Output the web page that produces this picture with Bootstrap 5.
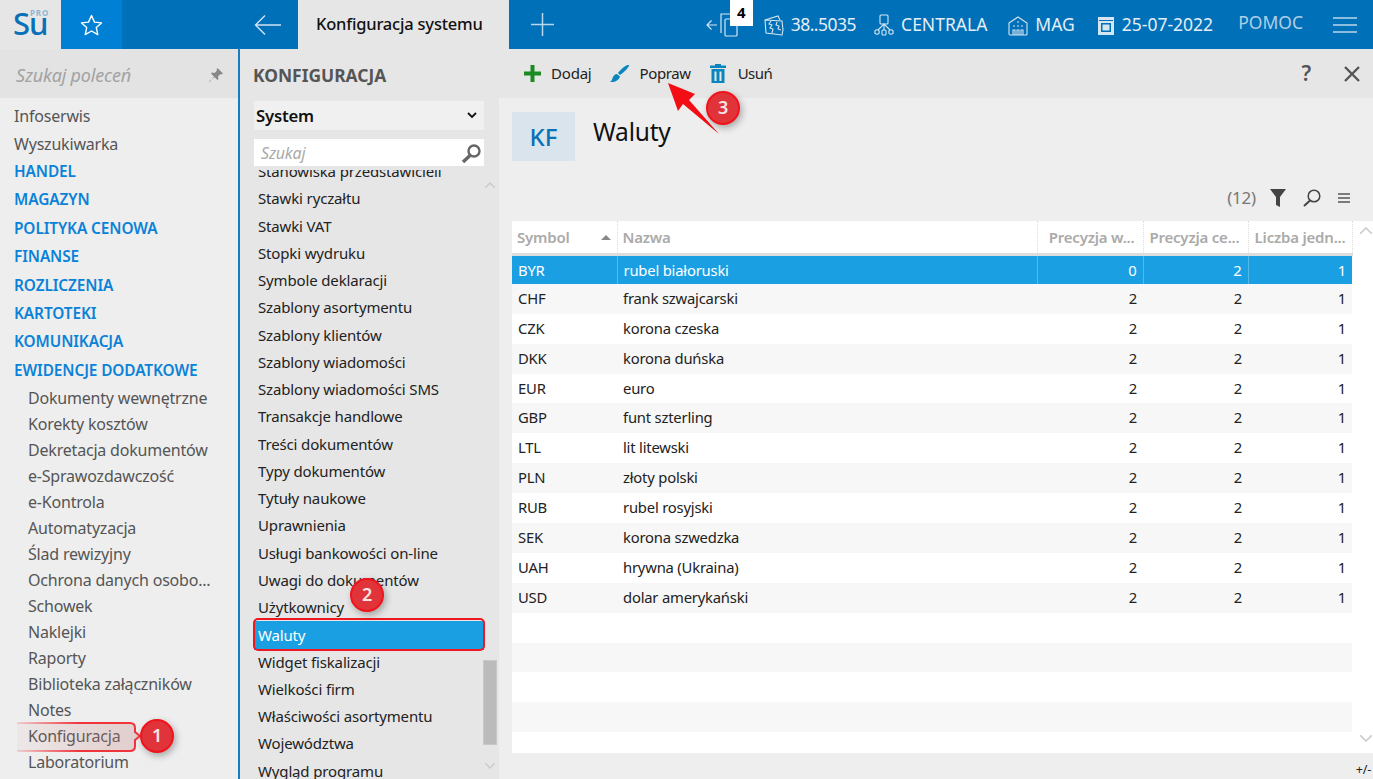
<!DOCTYPE html>
<html lang="pl"><head><meta charset="utf-8"><title>Waluty</title>
<link href="https://cdn.jsdelivr.net/npm/bootstrap@5.3.0/dist/css/bootstrap.min.css" rel="stylesheet">
<style>
html,body{height:779px;overflow:hidden;margin:0}
body{font-family:"Noto Sans","Open Sans",sans-serif;font-size:15px;background:#eee;color:#222;position:relative;letter-spacing:-.2px}
.topbar{height:49px;background:#0070b8;color:#e4eef6}
.logo-box{width:61px;background:#e6e6e6;position:relative;color:#0a70b8}
.logo-su{position:absolute;left:13px;top:10px;font-size:31px;font-weight:500;letter-spacing:-1px;line-height:26px}
.logo-pro{position:absolute;left:30px;top:8px;font-size:8px;font-weight:700;color:#8fb6d3;letter-spacing:.9px;line-height:9px}
.star-box{width:61px;background:#0080d5}
.top-gap{width:115px}
.back-box{width:61px}
.tab-box{width:211px;background:#e6e6e6;color:#111;font-size:16.5px;font-weight:500;padding-left:18px;white-space:nowrap}
.plus-box{width:66px}
.top-item{font-size:17.5px;white-space:nowrap;gap:7px;letter-spacing:0}
.win-box{position:relative;width:48px;height:49px;margin-right:11px}
.win-count{position:absolute;right:0;top:0;width:23px;height:26px;background:#fff;color:#000;font-weight:700;font-size:15px;line-height:24px;text-align:center}
.win-svg{position:absolute;left:0;top:11px}
.workspace{height:730px}
.side-one{width:238px;background:#eee}
.side-line{width:2px;background:#1a7cc0}
.side-search{height:49px;background:#e3e3e3;padding:3px 14px 0 16px;color:#a2a2a2;font-style:italic;font-size:18px}
.side-nav{padding:4px 0 0 14px;color:#555;font-size:16px}
.nav-plain{height:28px;line-height:28px}
.nav-sec{height:28.4px;line-height:28.4px;color:#0a82d8;font-weight:600;font-size:15.4px;letter-spacing:-.1px}
.nav-sub{height:26px;line-height:26px;padding-left:14px;white-space:nowrap}
.side-two{width:259px;background:#e6e6e6;position:relative}
.two-title{height:49px;padding:3px 0 0 13px;font-weight:700;font-size:17.4px;color:#555;letter-spacing:0}
.two-select{margin:3px 15px 0 14px;height:29px;background:#f0f0f0;padding:0 7px 0 2px;font-weight:600;font-size:16.7px;color:#111}
.two-search{margin:9px 15px 0 14px;height:27px;background:#fff;padding:1px 2px 0 7px;color:#aaa;font-style:italic;font-size:16px}
.two-clip{height:609px;margin-top:4px;overflow:hidden;padding:0 15px 0 14px}
.two-list{margin-top:-12px}
.two-row{height:27.27px;line-height:27.27px;padding-left:4px;white-space:nowrap;color:#222;letter-spacing:-.15px}
.two-row.picked{background:#1b9fe3;color:#fff;height:29px;line-height:29px;margin:-1px 0 -1px}
.thumb{position:absolute;left:243px;top:611px;width:14px;height:85px;background:#bbb;border:1px solid #c8c8c8}
.chev-up{position:absolute;left:245px;top:133px}
.chev-dn{position:absolute;left:245px;top:714px}
.main-pane{width:874px;background:#eee}
.tool-bar{height:49px;background:#e6e6e6;padding:0 13px 0 25px}
.tool-item{gap:10px;margin-right:18px;color:#222}
.tool-mid{margin-right:19px}
.tool-usun{gap:12px;letter-spacing:-.5px}
.tool-right{gap:33px}
.tool-q{font-size:21px;color:#555;font-weight:600}
.head-row{height:86px;padding:14px 0 0 13px}
.kf-box{width:63px;height:49px;background:#d9e4ec;color:#0a70b8;font-size:24px;font-weight:500;letter-spacing:0}
.head-title{font-size:24.5px;margin:-2px 0 0 18px;line-height:44px;color:#111;letter-spacing:-.2px}
.count-row{height:28px;margin-bottom:9px;padding-right:23px;color:#777;font-size:17px}
.count-num{margin-right:14px}
.count-fun{margin-right:17px}
.count-find{margin-right:17px}
.grid-wrap{background:#fff;margin-left:13px;height:532px;position:relative}
.grid-tab{width:840px;table-layout:fixed;margin:0}
.grid-tab th,.grid-tab td{padding:0 6px;border:0;white-space:nowrap;overflow:hidden;box-shadow:none;background:transparent;color:#222;font-weight:400;text-overflow:ellipsis}
.grid-tab th{height:33px;color:#aaa;font-weight:600;font-size:15px;border-bottom:3px solid #ddd;border-right:1px dotted #ddd;padding:0 5px 0 5px;vertical-align:middle}
.grid-tab th.num-h{text-align:right;padding:0 6px 0 2px}
.grid-tab td{height:29.9px;font-size:14.8px;padding-top:3px}
.grid-tab td.num-c{text-align:right}
.grid-tab tr.alt td{background:#f7f7f7}
.grid-tab tr.sel td{background:#1b9fe3;color:#fff;border-right:1px solid #58b7ea}
.grid-tab tr.sel td:last-child{border-right:0}
.sort-tri{position:absolute;left:89px;top:14px;width:0;height:0;border-left:5px solid transparent;border-right:5px solid transparent;border-bottom:5px solid #888}
.g-up{position:absolute;left:848px;top:6px}
.g-dn{position:absolute;left:848px;top:514px}
.foot-bar{height:26px;font-size:12.5px;line-height:16px;padding:9px 2px 0 0;color:#222}
.mark-over{position:absolute;left:0;top:0;pointer-events:none}
.bubble{position:absolute;width:34px;height:34px;border-radius:50%;background:#e0343a;border:2px solid #f2121c;color:#f7e4e4;font-weight:600;font-size:18px;line-height:29px;text-align:center;box-shadow:2px 3px 7px rgba(0,0,0,.3)}
.bub-a{left:140px;top:719px}
.bub-b{left:350px;top:578px}
.bub-c{left:706px;top:91px}
.red-frame{position:absolute;left:253px;top:618px;width:232px;height:33px;border:2px solid #f01820;border-radius:5px}
</style></head><body>
<div class="topbar d-flex">
 <div class="logo-box"><span class="logo-su">Su</span><span class="logo-pro">PRO</span></div>
 <div class="star-box d-flex align-items-center justify-content-center">
  <svg width="23" height="22" viewBox="0 0 23 22" fill="none" stroke="#fff" stroke-width="1.4" stroke-linejoin="round"><path d="M11.5 1.5l3 6.6 7 .8-5.2 4.7 1.5 7-6.3-3.6-6.3 3.6 1.5-7L1.500 8.900l7-.8z"/></svg></div>
 <div class="top-gap"></div>
 <div class="back-box d-flex align-items-center justify-content-center">
  <svg width="28" height="22" viewBox="0 0 28 22" fill="none" stroke="#cfe3f2" stroke-width="1.4"><path d="M27 11H1.500M11 1.500L1.500 11l9.500 9.500"/></svg></div>
 <div class="tab-box d-flex align-items-center">Konfiguracja systemu</div>
 <div class="plus-box d-flex align-items-center justify-content-center">
  <svg width="23" height="23" viewBox="0 0 23 23" stroke="#b9d6ea" stroke-width="1.5"><path d="M11.500 0v23M0 11.500h23"/></svg></div>
 <div class="flex-grow-1"></div>
 <div class="win-box">
  <svg class="win-svg" width="34" height="28" viewBox="0 0 34 28" fill="none" stroke="#d5e6f2" stroke-width="1.200"><path d="M12 14H2M6.500 9.500L2 14l4.500 4.500M16 22V3h11v6"/><rect x="20" y="8" width="12" height="17" rx="1"/></svg>
  <div class="win-count">4</div></div>
 <div class="d-flex align-items-center top-item" style="margin-right:18px">
  <svg width="20" height="22" viewBox="0 0 20 22" fill="none" stroke="#d5e6f2" stroke-width="1.1"><path d="M1 6l13-4 2 4M1 6l17 1 1 9-1 5-16-2zM7 7l-2 3 3 1-2 3 3 1-1 4M13 8l-1 3 3 1-1 3 3 1"/></svg>
  <span style="letter-spacing:-.5px">38..5035</span></div>
 <div class="d-flex align-items-center top-item" style="margin-right:21px">
  <svg width="20" height="22" viewBox="0 0 20 22" fill="none" stroke="#d5e6f2" stroke-width="1.1"><rect x="6" y="1" width="8" height="9" rx="1"/><path d="M10 10v6M4 16l6-6 6 6"/><circle cx="3" cy="18" r="2.200"/><rect x="8" y="16" width="4" height="5" rx="1"/><circle cx="17" cy="18" r="2.200"/></svg>
  <span>CENTRALA</span></div>
 <div class="d-flex align-items-center top-item" style="margin-right:22px">
  <svg width="20" height="22" viewBox="0 0 20 22" fill="none" stroke="#d5e6f2" stroke-width="1.1"><path d="M1 9l9-6 9 6v11a1 1 0 0 1-1 1H2a1 1 0 0 1-1-1zM5 21v-5h2v5M9 21v-5h2v5M13 21v-5h2v5M5 12h2M9 12h2M13 12h2M9 8h2"/></svg>
  <span>MAG</span></div>
 <div class="d-flex align-items-center top-item" style="margin-right:25px">
  <svg width="18" height="22" viewBox="0 0 18 22"><path fill="#d5e6f2" d="M1 3h16v18H1z"/><path fill="#0070b8" d="M2 6h14v1H2zM4 9h10v9H4z"/><path fill="#d5e6f2" d="M5.500 10.500h7v6h-7z"/></svg>
  <span>25-07-2022</span></div>
 <div class="top-item d-flex align-items-center" style="color:#aecfe6;margin-right:30px;padding-bottom:4px">POMOC</div>
 <div class="d-flex align-items-center" style="margin-right:16px">
  <svg width="24" height="16" viewBox="0 0 24 16" stroke="#b9d6ea" stroke-width="1.500"><path d="M0 1h24M0 8h24M0 15h24"/></svg></div>
</div>

<div class="workspace d-flex">
 <div class="side-one d-flex flex-column">
  <div class="side-search d-flex align-items-center justify-content-between"><span>Szukaj poleceń</span>
   <svg width="16" height="16" viewBox="0 0 16 16" fill="#888"><path d="M9.500 1l5.500 5.500-1.500 1-1-.500L10 9.500l.500 2.500-1 1L6 9.500 1.500 15 1 14.500 6.500 10 3 6.500l1-1 2.500.500L9 3.500 8.500 2.500z"/></svg></div>
  <div class="side-nav">
   <div class="nav-plain">Infoserwis</div><div class="nav-plain">Wyszukiwarka</div>
   <div class="nav-sec">HANDEL</div><div class="nav-sec">MAGAZYN</div><div class="nav-sec">POLITYKA CENOWA</div><div class="nav-sec">FINANSE</div><div class="nav-sec">ROZLICZENIA</div><div class="nav-sec">KARTOTEKI</div><div class="nav-sec">KOMUNIKACJA</div><div class="nav-sec">EWIDENCJE DODATKOWE</div>
   <div class="nav-sub">Dokumenty wewnętrzne</div><div class="nav-sub">Korekty kosztów</div><div class="nav-sub">Dekretacja dokumentów</div><div class="nav-sub">e-Sprawozdawczość</div><div class="nav-sub">e-Kontrola</div><div class="nav-sub">Automatyzacja</div><div class="nav-sub">Ślad rewizyjny</div><div class="nav-sub">Ochrona danych osobo...</div><div class="nav-sub">Schowek</div><div class="nav-sub">Naklejki</div><div class="nav-sub">Raporty</div><div class="nav-sub">Biblioteka załączników</div><div class="nav-sub">Notes</div><div class="nav-sub">Konfiguracja</div><div class="nav-sub">Laboratorium</div>
  </div>
 </div>
 <div class="side-line"></div>
 <div class="side-two">
  <div class="two-title d-flex align-items-center">KONFIGURACJA</div>
  <div class="two-select d-flex align-items-center justify-content-between"><span>System</span>
   <svg width="10" height="7" viewBox="0 0 10 7" fill="none" stroke="#111" stroke-width="1.800"><path d="M1 1l4 4 4-4"/></svg></div>
  <div class="two-search d-flex align-items-center justify-content-between"><span>Szukaj</span>
   <svg width="21" height="21" viewBox="0 0 21 21" fill="none" stroke="#666"><circle cx="13" cy="8" r="5.500" stroke-width="2.400"/><path d="M9 12.500L2 19" stroke-width="3.400"/></svg></div>
  <div class="two-clip"><div class="two-list">
   <div class="two-row">Stanowiska przedstawicieli</div><div class="two-row">Stawki ryczałtu</div><div class="two-row">Stawki VAT</div><div class="two-row">Stopki wydruku</div><div class="two-row">Symbole deklaracji</div><div class="two-row">Szablony asortymentu</div><div class="two-row">Szablony klientów</div><div class="two-row">Szablony wiadomości</div><div class="two-row">Szablony wiadomości SMS</div><div class="two-row">Transakcje handlowe</div><div class="two-row">Treści dokumentów</div><div class="two-row">Typy dokumentów</div><div class="two-row">Tytuły naukowe</div><div class="two-row">Uprawnienia</div><div class="two-row">Usługi bankowości on-line</div><div class="two-row">Uwagi do dokumentów</div><div class="two-row">Użytkownicy</div><div class="two-row picked">Waluty</div><div class="two-row">Widget fiskalizacji</div><div class="two-row">Wielkości firm</div><div class="two-row">Właściwości asortymentu</div><div class="two-row">Województwa</div><div class="two-row">Wygląd programu</div>
  </div></div>
  <svg class="chev-up" width="10" height="6" viewBox="0 0 10 6" fill="none" stroke="#ccc" stroke-width="1.500"><path d="M0 6l5-5 5 5"/></svg>
  <div class="thumb"></div>
  <svg class="chev-dn" width="10" height="6" viewBox="0 0 10 6" fill="none" stroke="#ccc" stroke-width="1.500"><path d="M0 0l5 5 5-5"/></svg>
 </div>
 <div class="main-pane d-flex flex-column">
  <div class="tool-bar d-flex align-items-center">
   <div class="tool-item d-flex align-items-center"><svg width="17" height="17" viewBox="0 0 17 17" fill="#1a8a22"><path d="M6.500 0h4v6.500H17v4h-6.500V17h-4v-6.500H0v-4h6.500z"/></svg><span>Dodaj</span></div>
   <div class="tool-item tool-mid d-flex align-items-center"><svg width="20" height="18" viewBox="0 0 20 18" fill="#0a85bd"><path d="M19 0c1 1-4 7-9 10L8 8c3-4 9-9 11-8zM7 9l3 2.500C9 15 5 17.500 0 17c2-1 2-3 3-5 1-2 2.500-3 4-3z"/></svg><span style="letter-spacing:-.4px">Popraw</span></div>
   <div class="tool-item tool-usun d-flex align-items-center"><svg width="16" height="19" viewBox="0 0 16 19" fill="#0a85bd"><path d="M5 0h6v1.500h5V4H0V1.500h5zM1.500 5h13v14h-13zM4.500 7.500V17h2V7.500zM9.500 7.500V17h2V7.500z"/></svg><span>Usuń</span></div>
   <div class="tool-right ms-auto d-flex align-items-center">
    <span class="tool-q">?</span>
    <svg width="16" height="16" viewBox="0 0 16 16" stroke="#555" stroke-width="2.400"><path d="M1 1l14 14M15 1L1 15"/></svg></div>
  </div>
  <div class="head-row d-flex align-items-start"><div class="kf-box d-flex align-items-center justify-content-center">KF</div><div class="head-title">Waluty</div></div>
  <div class="count-row d-flex align-items-center justify-content-end"><span class="count-num">(12)</span>
   <svg class="count-fun" width="16" height="18" viewBox="0 0 16 18" fill="#444"><path d="M0 0h16L10 8v10l-4-2V8z"/></svg>
   <svg class="count-find" width="18" height="18" viewBox="0 0 18 18" fill="none" stroke="#444"><circle cx="11" cy="7" r="5.800" stroke-width="1.500"/><path d="M7 11.500L1 17" stroke-width="2"/></svg>
   <svg width="12" height="10" viewBox="0 0 12 10" stroke="#555" stroke-width="1.300"><path d="M0 1h12M0 5h12M0 9h12"/></svg></div>
  <div class="grid-wrap">
   <table class="table grid-tab"><colgroup><col style="width:105px"><col style="width:420px"><col style="width:106px"><col style="width:105px"><col style="width:104px"></colgroup>
    <thead><tr><th>Symbol</th><th>Nazwa</th><th class="num-h pe-2">Precyzja w...</th><th class="num-h pe-2">Precyzja ce...</th><th class="num-h">Liczba jedn...</th></tr></thead>
    <tbody>
     <tr class="sel"><td>BYR</td><td>rubel białoruski</td><td class="num-c">0</td><td class="num-c">2</td><td class="num-c">1</td></tr>
     <tr class="alt"><td>CHF</td><td>frank szwajcarski</td><td class="num-c">2</td><td class="num-c">2</td><td class="num-c">1</td></tr>
     <tr><td>CZK</td><td>korona czeska</td><td class="num-c">2</td><td class="num-c">2</td><td class="num-c">1</td></tr>
     <tr class="alt"><td>DKK</td><td>korona duńska</td><td class="num-c">2</td><td class="num-c">2</td><td class="num-c">1</td></tr>
     <tr><td>EUR</td><td>euro</td><td class="num-c">2</td><td class="num-c">2</td><td class="num-c">1</td></tr>
     <tr class="alt"><td>GBP</td><td>funt szterling</td><td class="num-c">2</td><td class="num-c">2</td><td class="num-c">1</td></tr>
     <tr><td>LTL</td><td>lit litewski</td><td class="num-c">2</td><td class="num-c">2</td><td class="num-c">1</td></tr>
     <tr class="alt"><td>PLN</td><td>złoty polski</td><td class="num-c">2</td><td class="num-c">2</td><td class="num-c">1</td></tr>
     <tr><td>RUB</td><td>rubel rosyjski</td><td class="num-c">2</td><td class="num-c">2</td><td class="num-c">1</td></tr>
     <tr class="alt"><td>SEK</td><td>korona szwedzka</td><td class="num-c">2</td><td class="num-c">2</td><td class="num-c">1</td></tr>
     <tr><td>UAH</td><td>hrywna (Ukraina)</td><td class="num-c">2</td><td class="num-c">2</td><td class="num-c">1</td></tr>
     <tr class="alt"><td>USD</td><td>dolar amerykański</td><td class="num-c">2</td><td class="num-c">2</td><td class="num-c">1</td></tr>
     <tr><td colspan="5"></td></tr><tr class="alt"><td colspan="5"></td></tr><tr><td colspan="5"></td></tr><tr class="alt"><td colspan="5"></td></tr>
    </tbody></table>
   <div class="sort-tri"></div>
   <svg class="g-up" width="12" height="7" viewBox="0 0 12 7" fill="none" stroke="#ccc" stroke-width="1.600"><path d="M0 7l6-6 6 6"/></svg>
   <svg class="g-dn" width="12" height="7" viewBox="0 0 12 7" fill="none" stroke="#ccc" stroke-width="1.600"><path d="M0 0l6 6 6-6"/></svg>
  </div>
  <div class="foot-bar text-end">+/-</div>
 </div>
</div>

<div class="red-frame"></div>
<svg class="mark-over" width="1373" height="779">
 <defs>
  <linearGradient id="tagFill" x1="0" x2="1" y1="0" y2="0"><stop offset="0" stop-color="#d07070" stop-opacity=".05"/><stop offset="1" stop-color="#c08080" stop-opacity=".3"/></linearGradient>
  <linearGradient id="tagLine" gradientUnits="userSpaceOnUse" x1="17" x2="80" y1="0" y2="0"><stop offset="0" stop-color="#f0343c" stop-opacity=".15"/><stop offset="1" stop-color="#f0343c"/></linearGradient>
 </defs>
 <path d="M17 723H130q5 0 5 5v4l5 4-5 4v6q0 5-5 5H17" fill="url(#tagFill)" stroke="url(#tagLine)" stroke-width="2"/>
 <path d="M668 83L695 94 689 100 719 134 683 104 678 111z" fill="#f30d14"/>
</svg>
<div class="bubble bub-a">1</div>
<div class="bubble bub-b">2</div>
<div class="bubble bub-c">3</div>
</body></html>
